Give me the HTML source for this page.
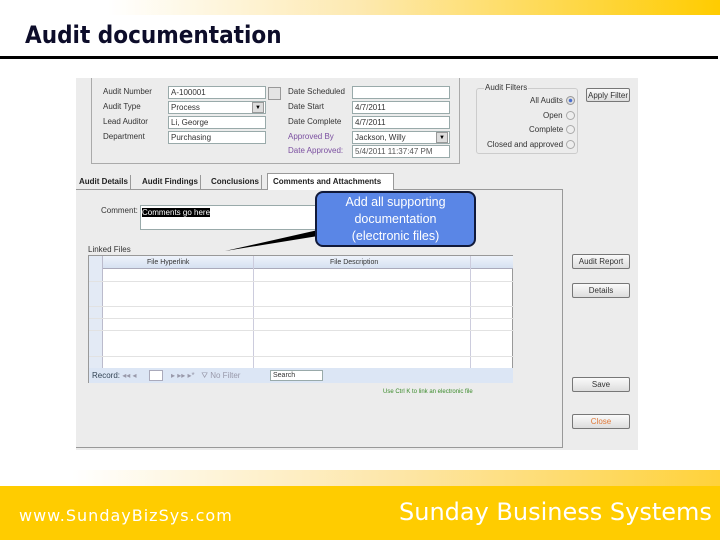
<!DOCTYPE html>
<html><head><meta charset="utf-8"><style>
*{margin:0;padding:0;box-sizing:border-box}
body{width:720px;height:540px;position:relative;background:#fff;font-family:"Liberation Sans",sans-serif;overflow:hidden}
.a{position:absolute}
.t{position:absolute;font-size:8px;color:#333;white-space:nowrap;line-height:10px}
.in{position:absolute;background:#fff;border:1px solid #9aa;font-size:8px;line-height:11px;padding-left:2px;color:#333;white-space:nowrap;overflow:hidden}
.btn{position:absolute;width:58px;height:15px;border:1px solid #777;background:linear-gradient(#fafafa,#ddd);font-size:8px;text-align:center;line-height:13px;color:#333;border-radius:2px}
.tab{position:absolute;top:175px;height:14px;font-size:8px;font-weight:bold;line-height:14px;color:#222;padding:0 2px;border-right:1px solid #999}
.hl{position:absolute;left:0;height:1px;background:#e2e2e2;width:425px}
</style></head><body>
<div class="a" style="left:0;top:0;width:720px;height:15px;background:linear-gradient(90deg,#fff 0%,#fff 15%,#fde9b0 50%,#ffcc00 100%)"></div>
<div class="a" style="left:25px;top:21px;font-size:24px;font-weight:bold;color:#0d0d2a;font-family:'DejaVu Sans Condensed','Liberation Sans',sans-serif;white-space:nowrap">Audit documentation</div>
<div class="a" style="left:0;top:56px;width:718px;height:3px;background:#000"></div>

<div class="a" style="left:76px;top:78px;width:562px;height:372px;background:#ececec"></div>
<div class="a" style="left:91px;top:78px;width:1px;height:86px;background:#aaa"></div>
<div class="a" style="left:459px;top:78px;width:1px;height:86px;background:#aaa"></div>
<div class="a" style="left:91px;top:163px;width:369px;height:1px;background:#aaa"></div>

<div class="t" style="left:103px;top:87px">Audit Number</div>
<div class="t" style="left:103px;top:102px">Audit Type</div>
<div class="t" style="left:103px;top:117px">Lead Auditor</div>
<div class="t" style="left:103px;top:132px">Department</div>
<div class="in" style="left:168px;top:86px;width:98px;height:13px">A-100001</div>
<div class="in" style="left:168px;top:101px;width:98px;height:13px">Process</div>
<div class="a" style="left:252px;top:102px;width:12px;height:11px;background:#ddd;border:1px solid #999;font-size:6px;text-align:center;line-height:10px">▼</div>
<div class="in" style="left:168px;top:116px;width:98px;height:13px">Li, George</div>
<div class="in" style="left:168px;top:131px;width:98px;height:13px">Purchasing</div>
<div class="a" style="left:268px;top:87px;width:13px;height:13px;background:#e4e4e4;border:1px solid #999"></div>

<div class="t" style="left:288px;top:87px">Date Scheduled</div>
<div class="t" style="left:288px;top:102px">Date Start</div>
<div class="t" style="left:288px;top:117px">Date Complete</div>
<div class="t" style="left:288px;top:132px;color:#7b4fa0">Approved By</div>
<div class="t" style="left:288px;top:146px;color:#7b4fa0">Date Approved:</div>
<div class="in" style="left:352px;top:86px;width:98px;height:13px"></div>
<div class="in" style="left:352px;top:101px;width:98px;height:13px">4/7/2011</div>
<div class="in" style="left:352px;top:116px;width:98px;height:13px">4/7/2011</div>
<div class="in" style="left:352px;top:131px;width:98px;height:13px">Jackson, Willy</div>
<div class="a" style="left:436px;top:132px;width:12px;height:11px;background:#ddd;border:1px solid #999;font-size:6px;text-align:center;line-height:10px">▼</div>
<div class="in" style="left:352px;top:145px;width:98px;height:13px;color:#555">5/4/2011 11:37:47 PM</div>

<div class="a" style="left:476px;top:88px;width:102px;height:66px;border:1px solid #ccc;border-radius:3px"></div>
<div class="t" style="left:484px;top:83px;background:#ececec;padding:0 1px">Audit Filters</div>
<div class="t" style="left:530px;top:96px">All Audits</div>
<div class="t" style="left:543px;top:111px">Open</div>
<div class="t" style="left:529px;top:125px">Complete</div>
<div class="t" style="left:487px;top:140px">Closed and approved</div>
<div class="a" style="left:566px;top:96px;width:9px;height:9px;border-radius:50%;background:radial-gradient(#4a6fd0 30%,#ddd 40%);border:1px solid #999"></div>
<div class="a" style="left:566px;top:111px;width:9px;height:9px;border-radius:50%;background:#eee;border:1px solid #aaa"></div>
<div class="a" style="left:566px;top:125px;width:9px;height:9px;border-radius:50%;background:#eee;border:1px solid #aaa"></div>
<div class="a" style="left:566px;top:140px;width:9px;height:9px;border-radius:50%;background:#eee;border:1px solid #aaa"></div>
<div class="btn" style="left:586px;top:88px;width:44px;height:14px">Apply Filter</div>

<div class="tab" style="left:77px">Audit Details</div>
<div class="tab" style="left:140px">Audit Findings</div>
<div class="tab" style="left:209px">Conclusions</div>
<div class="a" style="left:76px;top:189px;width:487px;height:259px;border:1px solid #999;border-left:none;background:#ececec"></div>
<div class="tab" style="left:267px;top:173px;height:17px;width:127px;background:#fff;border:1px solid #999;border-bottom:none;padding-left:5px;line-height:15px">Comments and Attachments</div>

<div class="t" style="left:101px;top:206px">Comment:</div>
<div class="in" style="left:140px;top:205px;width:191px;height:25px;padding:1px"><span style="background:#000;color:#fff">Comments go here</span></div>
<div class="t" style="left:88px;top:245px">Linked Files</div>

<div class="a" style="left:88px;top:255px;width:425px;height:128px;background:#fff;border:1px solid #999">
 <div class="a" style="left:0;top:0;width:424px;height:13px;background:linear-gradient(#eef3fb,#d6e1f1);border-bottom:1px solid #aab"></div>
 <div class="a" style="left:0;top:0;width:14px;height:112px;background:#e3eaf5;border-right:1px solid #bbc"></div>
 <div class="t" style="left:58px;top:2px;font-size:7px">File Hyperlink</div>
 <div class="t" style="left:241px;top:2px;font-size:7px">File Description</div>
 <div class="a" style="left:164px;top:0;width:1px;height:112px;background:#ccd"></div>
 <div class="a" style="left:381px;top:0;width:1px;height:112px;background:#ccd"></div>
 <div class="hl" style="top:25px"></div><div class="hl" style="top:50px"></div><div class="hl" style="top:62px"></div><div class="hl" style="top:74px"></div><div class="hl" style="top:100px"></div>
 <div class="a" style="left:0;top:112px;width:424px;height:15px;background:#dce6f5"></div>
 <div class="t" style="left:3px;top:115px;color:#345">Record: <span style="color:#99a">◂◂ ◂</span></div>
 <div class="a" style="left:60px;top:114px;width:14px;height:11px;background:#fff;border:1px solid #aab"></div>
 <div class="t" style="left:82px;top:115px;color:#99a">▸ ▸▸ ▸* &nbsp; ⛛ No Filter</div>
 <div class="in" style="left:181px;top:114px;width:53px;height:11px;font-size:7px;line-height:9px">Search</div>
</div>
<div class="t" style="left:383px;top:387px;font-size:6px;color:#3a8a2a">Use Ctrl K to link an electronic file</div>

<div class="btn" style="left:572px;top:254px">Audit Report</div>
<div class="btn" style="left:572px;top:283px">Details</div>
<div class="btn" style="left:572px;top:377px">Save</div>
<div class="btn" style="left:572px;top:414px;color:#e07a3a">Close</div>

<svg class="a" style="left:0;top:0" width="720" height="540"><polygon points="318,230 318,236 225,251" fill="#000"/></svg>
<div class="a" style="left:315px;top:191px;width:161px;height:56px;background:#5a86e6;border:2px solid #111a3a;border-radius:8px;color:#fff;font-size:12.5px;line-height:17px;text-align:center;padding-top:1px">Add all supporting<br>documentation<br>(electronic files)</div>

<div class="a" style="left:0;top:470px;width:720px;height:16px;background:linear-gradient(90deg,#fff 0%,#fff 10%,#fde6a8 55%,#ffd23a 100%)"></div>
<div class="a" style="left:0;top:486px;width:720px;height:54px;background:#ffcc00"></div>
<div class="a" style="left:19px;top:506px;font-size:16px;letter-spacing:1px;color:#fff;font-family:'DejaVu Sans','Liberation Sans',sans-serif;white-space:nowrap">www.SundayBizSys.com</div>
<div class="a" style="left:399px;top:498px;font-size:24px;color:#fff;font-family:'DejaVu Sans','Liberation Sans',sans-serif;white-space:nowrap">Sunday Business Systems</div>
</body></html>
